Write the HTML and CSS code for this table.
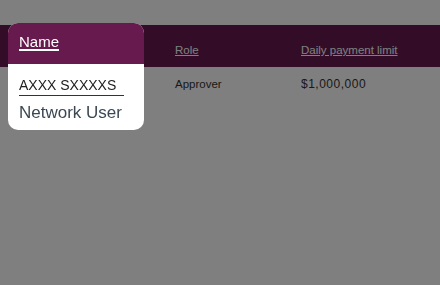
FILE: index.html
```html
<!DOCTYPE html>
<html>
<head>
    <title>Users</title>
    <link rel="stylesheet" href="styles.css">
</head>
<body>
    <div class="page">
        <table class="users">
            <colgroup>
                <col class="col-name">
                <col class="col-role">
                <col>
            </colgroup>
            <thead>
                <tr>
                    <th class="spotlit"><a href="#">Name</a></th>
                    <th><a href="#">Role</a></th>
                    <th><a href="#">Daily payment limit</a></th>
                </tr>
            </thead>
            <tbody>
                <tr>
                    <td class="spotlit"><span>AXXX SXXXXS</span></td>
                    <td>Approver</td>
                    <td class="amount">$1,000,000</td>
                </tr>
            </tbody>
        </table>
    </div>

    <!-- Dimmed backdrop with the highlighted column on top -->
    <div class="backdrop"></div>

    <div class="spotlight">
        <div class="spotlight-head"><a href="#">Name</a></div>
        <div class="spotlight-body">
            <span class="user-name">AXXX SXXXXS</span>
            <div class="user-type">Network User</div>
        </div>
    </div>
</body>
</html>
```

FILE: styles.css
```css
body {
    font-family: "Liberation Sans", Arial, sans-serif;
    background-color: #fff;
    margin: 0;
    padding: 0;
}

.page {
    padding-top: 25px;
}

.users {
    width: 100%;
    border-collapse: collapse;
    table-layout: fixed;
}

.col-name {
    width: 165px;
}

.col-role {
    width: 126px;
}

.users th {
    background-color: #661a4e;
    text-align: left;
    font-weight: normal;
    font-size: 11.5px;
    line-height: 14px;
    padding: 18px 10px 10px;
}

.users th a {
    color: #fff;
}

.users td {
    font-size: 11.5px;
    line-height: 14px;
    color: #333;
    padding: 10px 10px 8px;
}

.users td.amount {
    font-size: 12px;
    letter-spacing: 0.5px;
}

/* the spotlight card shows this column's text instead */
.users .spotlit a,
.users .spotlit span {
    visibility: hidden;
}

.backdrop {
    position: fixed;
    top: 0;
    left: 0;
    right: 0;
    bottom: 0;
    background-color: rgba(0, 0, 0, 0.5);
}

.spotlight {
    position: absolute;
    left: 8px;
    top: 23px;
    width: 136px;
    height: 107px;
    background-color: #fff;
    border-radius: 10px;
    overflow: hidden;
}

.spotlight-head {
    background-color: #661a4e;
    height: 41px;
    box-sizing: border-box;
    padding: 10px 11px 0;
    font-size: 15px;
    line-height: 18px;
}

.spotlight-head a {
    color: #fff;
    text-decoration-thickness: 2px;
    text-underline-offset: 2px;
}

.spotlight-body {
    padding: 12px 11px 0;
}

.user-name {
    display: inline-block;
    font-size: 14px;
    line-height: 16px;
    color: #222;
    padding: 0 8px 2px 0;
    border-bottom: 1px solid #333;
}

.user-type {
    font-size: 17px;
    line-height: 22px;
    color: #3b4853;
    margin-top: 6px;
}
```
